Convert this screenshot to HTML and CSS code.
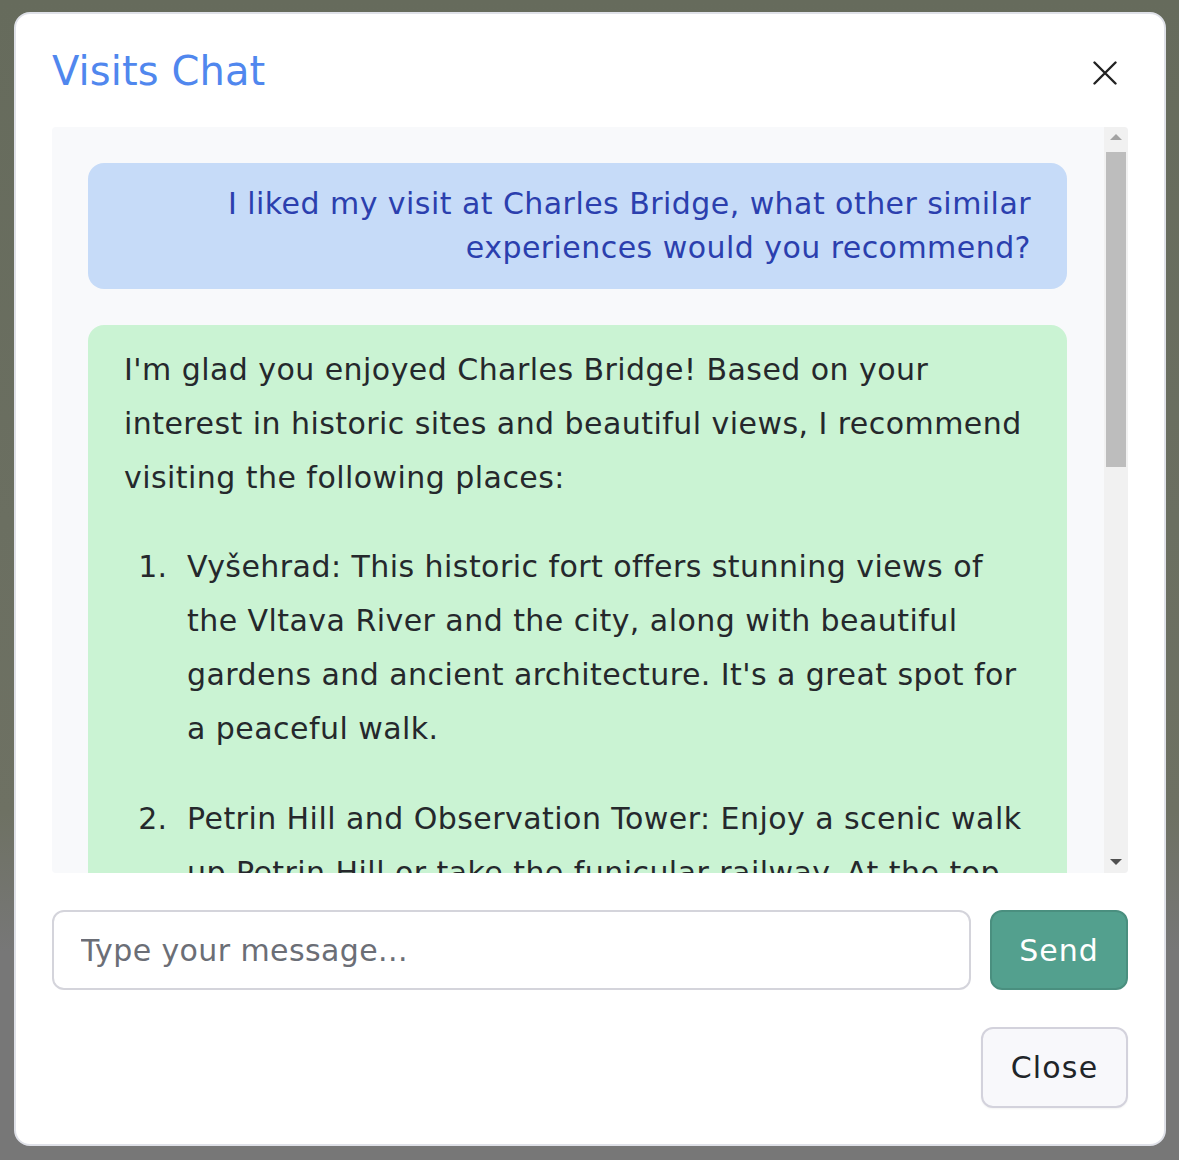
FILE: index.html
```html
<!DOCTYPE html>
<html lang="en">
<head>
<meta charset="utf-8">
<title>Visits Chat</title>
<link rel="stylesheet" href="styles.css">
</head>
<body>
<div class="backdrop">
  <div class="modal">
    <div class="modal-header">
      <h1 class="modal-title">Visits Chat</h1>
      <button class="icon-close" aria-label="Close">
        <svg width="24" height="24" viewBox="0 0 24 24"><path d="M1.5 1.5 L22.5 22.5 M22.5 1.5 L1.5 22.5" stroke="#222" stroke-width="2.4" stroke-linecap="round" fill="none"/></svg>
      </button>
    </div>
    <div class="chat">
      <div class="messages">
        <div class="bubble user">I liked my visit at Charles Bridge, what other similar experiences would you recommend?</div>
        <div class="bubble bot">
          <p>I'm glad you enjoyed Charles Bridge! Based on your interest in historic sites and beautiful views, I recommend visiting the following places:</p>
          <ol>
            <li>Vyšehrad: This historic fort offers stunning views of the Vltava River and the city, along with beautiful gardens and ancient architecture. It's a great spot for a peaceful walk.</li>
            <li>Petrin Hill and Observation Tower: Enjoy a scenic walk up Petrin Hill or take the funicular railway. At the top, you can climb the observation tower for panoramic views of Prague.</li>
          </ol>
        </div>
      </div>
      <div class="scrollbar">
        <div class="sb-btn"><span class="tri-up"></span></div>
        <div class="sb-track"><div class="sb-thumb"></div></div>
        <div class="sb-btn"><span class="tri-down"></span></div>
      </div>
    </div>
    <div class="composer">
      <input class="msg-input" type="text" placeholder="Type your message...">
      <button class="btn-send">Send</button>
    </div>
    <div class="modal-footer">
      <button class="btn-close">Close</button>
    </div>
  </div>
</div>
</body>
</html>
```

FILE: styles.css
```css
*, *::before, *::after { box-sizing: border-box; }
html, body { margin: 0; padding: 0; }
body {
  width: 1179px;
  height: 1160px;
  overflow: hidden;
  font-family: "DejaVu Sans", "Liberation Sans", sans-serif;
  letter-spacing: 0.45px;
}
.backdrop {
  width: 1179px;
  height: 1160px;
  padding: 12px 0 0 14px;
  background: linear-gradient(to bottom, #666b5c 0%, #6b6f61 45%, #6e7163 70%, #777777 82%, #777777 100%);
}
.modal {
  width: 1152px;
  height: 1134px;
  background: #ffffff;
  border: 2px solid #dfe1e8;
  border-radius: 16px;
  padding: 0 36px 36px;
  display: flex;
  flex-direction: column;
}
.modal-header {
  height: 113px;
  display: flex;
  align-items: center;
  justify-content: space-between;
}
.modal-title {
  margin: 0;
  font-size: 40px;
  font-weight: 400;
  line-height: 48px;
  letter-spacing: 0.1px;
  color: #5087ee;
}
.icon-close {
  border: 0;
  background: transparent;
  padding: 0;
  width: 24px;
  height: 24px;
  margin-right: 11px;
  margin-top: 4px;
  display: flex;
}
.chat {
  height: 746px;
  background: #f8f9fb;
  border-radius: 4px;
  display: flex;
  overflow: hidden;
}
.messages {
  flex: 1;
  overflow: hidden;
  padding: 36px 37px 0 36px;
  display: flex;
  flex-direction: column;
  gap: 36px;
}
.bubble {
  border-radius: 16px;
  padding: 19px 36px;
  font-size: 30px;
  flex-shrink: 0;
}
.bubble.user {
  background: #c6dbf8;
  color: #2b3fae;
  text-align: right;
  line-height: 44px;
}
.bubble.bot {
  background: #caf3d3;
  color: #25282c;
  line-height: 54px;
  padding-top: 18px;
}
.bubble.bot p { margin: 0 0 35px; }
.bubble.bot ol {
  margin: 0;
  padding: 0 0 0 63px;
  list-style: none;
  counter-reset: item;
}
.bubble.bot li {
  counter-increment: item;
}
.bubble.bot li + li { margin-top: 36px; }
.bubble.bot li::before {
  content: counter(item) ".";
  display: inline-block;
  width: 63px;
  margin-left: -63px;
  padding-right: 20px;
  text-align: right;
  letter-spacing: 0;
}
.scrollbar {
  width: 24px;
  background: #f1f1f1;
  display: flex;
  flex-direction: column;
}
.sb-btn {
  height: 24px;
  display: flex;
  align-items: center;
  justify-content: center;
}
.tri-up {
  width: 0; height: 0;
  border-left: 6px solid transparent;
  border-right: 6px solid transparent;
  border-bottom: 6px solid #a3a3a3;
  margin-top: -4px;
}
.tri-down {
  width: 0; height: 0;
  border-left: 6px solid transparent;
  border-right: 6px solid transparent;
  border-top: 6px solid #505050;
  margin-top: 2px;
}
.sb-track { flex: 1; padding: 1px 2px 0 2px; }
.sb-thumb {
  height: 315px;
  background: #bdbdbd;
}
.composer {
  margin-top: 37px;
  height: 80px;
  display: flex;
  gap: 19px;
}
.msg-input {
  flex: 1;
  height: 80px;
  border: 2px solid #d4d4db;
  border-radius: 12px;
  padding: 0 27px;
  font-family: inherit;
  font-size: 30px;
  letter-spacing: 0.4px;
  color: #212529;
  background: #fff;
  outline: none;
}
.msg-input::placeholder { color: #6b6e76; }
.btn-send {
  width: 138px;
  height: 80px;
  border: 2px solid #4a8f7f;
  border-radius: 12px;
  background: #53a08e;
  color: #ffffff;
  font-family: inherit;
  font-size: 30px;
  letter-spacing: 1px;
  padding: 0;
}
.modal-footer {
  margin-top: 37px;
  display: flex;
  justify-content: flex-end;
}
.btn-close {
  width: 147px;
  height: 81px;
  border: 2px solid #d3d2dc;
  border-radius: 12px;
  background: #f8f8fb;
  color: #212529;
  font-family: inherit;
  font-size: 30px;
  letter-spacing: 1.2px;
  padding: 0;
  box-shadow: 0 1px 2px rgba(0,0,0,0.05);
}
```
